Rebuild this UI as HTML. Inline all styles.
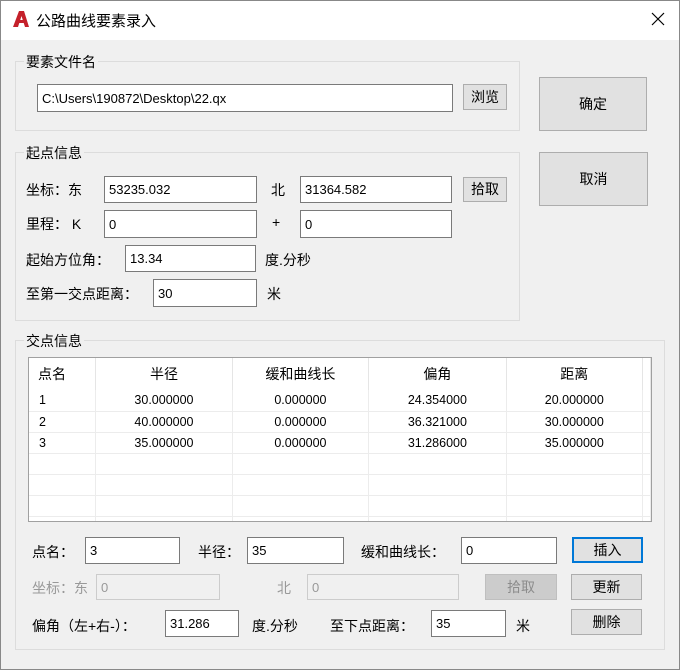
<!DOCTYPE html>
<html><head><meta charset="utf-8"><style>
*{box-sizing:border-box;margin:0;padding:0}
body{width:680px;height:670px;background:#f0f0f0;font-family:"Liberation Sans","Noto Sans CJK SC",sans-serif;font-size:14px;color:#000;position:relative;overflow:hidden}
.a{position:absolute;white-space:nowrap}
.title{left:0;top:0;width:680px;height:40px;background:#fff}
.win{left:0;top:0;width:680px;height:670px;border:1px solid #888}
.grp{position:absolute;border:1px solid #dcdcdc}
.lg{position:absolute;background:#f0f0f0;padding:0 2px;font-size:14px}
.in{position:absolute;background:#fff;border:1px solid #7a7a7a;font-size:13px;padding:0 4px;display:flex;align-items:center}
.in.dis{background:#f0f0f0;border-color:#ccc;color:#999}
.bt{position:absolute;background:#e1e1e1;border:1px solid #adadad;text-align:center;font-size:14px}
.bt.dis{background:#ccc;border-color:#bfbfbf;color:#8c8c8c}
.gr{color:#999}
table{border-collapse:collapse;font-size:12.5px}
td{height:21px;border-right:1px solid #ececec;border-bottom:1px solid #ececec;text-align:center}
th{height:32px;font-weight:normal;font-size:14px;border-right:1px solid #e5e5e5}
</style></head><body>
<div class="a title"></div>
<div class="a win"></div>
<svg class="a" style="left:12px;top:10px" width="18" height="18" viewBox="0 0 18 18"><path d="M1 17 L7 1 L12 1 L17 17 L13 17 L9.5 6 L6 17Z" fill="#c4202a"/><path d="M5 13 L12 13 L11 10 L6 10Z" fill="#c4202a"/></svg>
<div class="a" style="left:36px;top:10px;font-size:15px">公路曲线要素录入</div>
<svg class="a" style="left:651px;top:12px" width="14" height="14"><path d="M1 1L13 13M13 1L1 13" stroke="#000" stroke-width="1.2"/></svg>

<div class="grp" style="left:15px;top:61px;width:505px;height:70px"></div>
<div class="lg" style="left:24px;top:52px">要素文件名</div>
<div class="in" style="left:37px;top:84px;width:416px;height:28px">C:\Users\190872\Desktop\22.qx</div>
<div class="bt" style="left:463px;top:84px;width:44px;height:26px;line-height:24px">浏览</div>
<div class="bt" style="left:539px;top:77px;width:108px;height:54px;line-height:52px">确定</div>
<div class="bt" style="left:539px;top:152px;width:109px;height:54px;line-height:52px">取消</div>

<div class="grp" style="left:15px;top:152px;width:505px;height:169px"></div>
<div class="lg" style="left:24px;top:143px">起点信息</div>
<div class="a" style="left:26px;top:180px">坐标：东</div>
<div class="in" style="left:104px;top:176px;width:153px;height:27px">53235.032</div>
<div class="a" style="left:271px;top:180px">北</div>
<div class="in" style="left:300px;top:176px;width:152px;height:27px">31364.582</div>
<div class="bt" style="left:463px;top:177px;width:44px;height:25px;line-height:23px">拾取</div>
<div class="a" style="left:26px;top:214px">里程：&nbsp;K</div>
<div class="in" style="left:104px;top:210px;width:153px;height:28px">0</div>
<div class="a" style="left:272px;top:214px">+</div>
<div class="in" style="left:300px;top:210px;width:152px;height:28px">0</div>
<div class="a" style="left:26px;top:250px">起始方位角：</div>
<div class="in" style="left:125px;top:245px;width:131px;height:27px">13.34</div>
<div class="a" style="left:265px;top:250px">度.分秒</div>
<div class="a" style="left:26px;top:284px">至第一交点距离：</div>
<div class="in" style="left:153px;top:279px;width:104px;height:28px">30</div>
<div class="a" style="left:267px;top:284px">米</div>

<div class="grp" style="left:15px;top:340px;width:650px;height:310px"></div>
<div class="lg" style="left:24px;top:331px">交点信息</div>
<div class="a" style="left:28px;top:357px;width:624px;height:165px;background:#fff;border:1px solid #a0a0a0;overflow:hidden">
<table><tr><th style="width:67px;text-align:left;padding-left:9px">点名</th><th style="width:137px">半径</th><th style="width:137px">缓和曲线长</th><th style="width:138px">偏角</th><th style="width:137px">距离</th><th style="width:8px"></th></tr>
<tr><td style="text-align:left;padding-left:10px">1</td><td>30.000000</td><td>0.000000</td><td>24.354000</td><td>20.000000</td><td></td></tr>
<tr><td style="text-align:left;padding-left:10px">2</td><td>40.000000</td><td>0.000000</td><td>36.321000</td><td>30.000000</td><td></td></tr>
<tr><td style="text-align:left;padding-left:10px">3</td><td>35.000000</td><td>0.000000</td><td>31.286000</td><td>35.000000</td><td></td></tr>
<tr><td></td><td></td><td></td><td></td><td></td><td></td></tr>
<tr><td></td><td></td><td></td><td></td><td></td><td></td></tr>
<tr><td></td><td></td><td></td><td></td><td></td><td></td></tr>
<tr><td></td><td></td><td></td><td></td><td></td><td></td></tr>
</table></div>

<div class="a" style="left:32px;top:542px">点名：</div>
<div class="in" style="left:85px;top:537px;width:95px;height:27px">3</div>
<div class="a" style="left:198px;top:542px">半径：</div>
<div class="in" style="left:247px;top:537px;width:97px;height:27px">35</div>
<div class="a" style="left:361px;top:542px">缓和曲线长：</div>
<div class="in" style="left:461px;top:537px;width:96px;height:27px">0</div>
<div class="bt" style="left:572px;top:537px;width:71px;height:26px;line-height:22px;border:2px solid #0078d7">插入</div>

<div class="a gr" style="left:32px;top:578px">坐标：东</div>
<div class="in dis" style="left:96px;top:574px;width:124px;height:26px">0</div>
<div class="a gr" style="left:277px;top:578px">北</div>
<div class="in dis" style="left:307px;top:574px;width:152px;height:26px">0</div>
<div class="bt dis" style="left:485px;top:574px;width:72px;height:26px;line-height:24px">拾取</div>
<div class="bt" style="left:571px;top:574px;width:71px;height:26px;line-height:24px">更新</div>

<div class="a" style="left:32px;top:616px">偏角（左+右-）：</div>
<div class="in" style="left:165px;top:610px;width:74px;height:27px">31.286</div>
<div class="a" style="left:252px;top:616px">度.分秒</div>
<div class="a" style="left:330px;top:616px">至下点距离：</div>
<div class="in" style="left:431px;top:610px;width:75px;height:27px">35</div>
<div class="a" style="left:516px;top:616px">米</div>
<div class="bt" style="left:571px;top:609px;width:71px;height:26px;line-height:24px">删除</div>
</body></html>
